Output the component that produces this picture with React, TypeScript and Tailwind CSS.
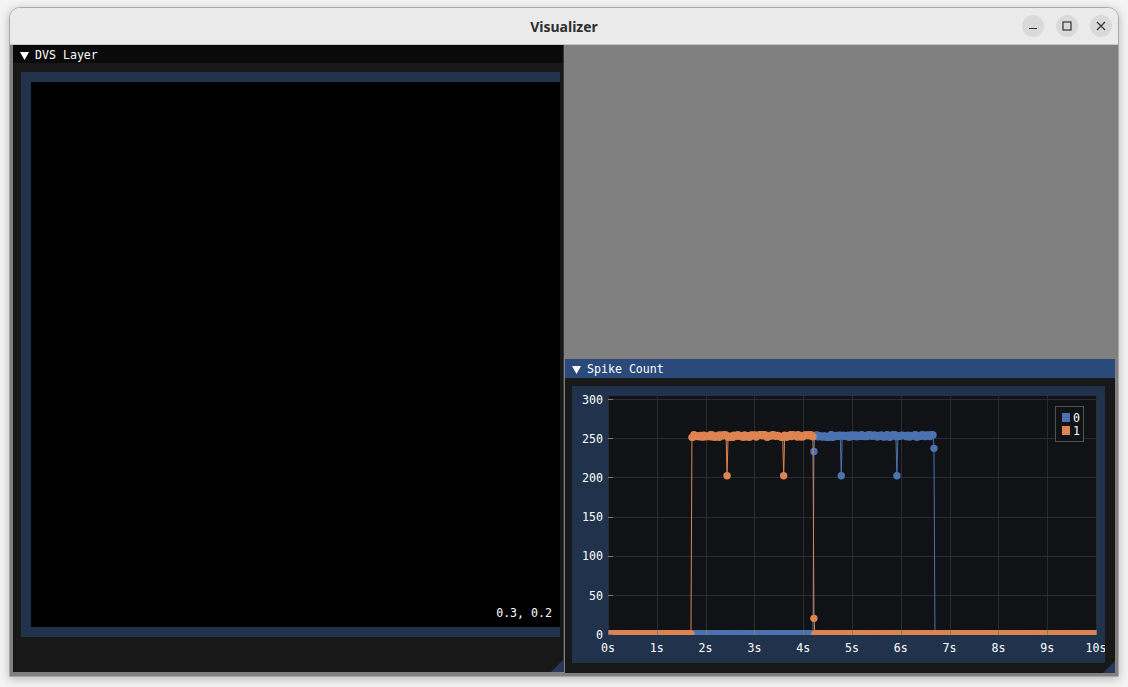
const BLUE = "#4c72b0";
const ORANGE = "#dd8452";
const MONO = "DejaVu Sans Mono, monospace";

function mulberry32(seed: number) {
  let a = seed;
  return () => {
    a |= 0;
    a = (a + 0x6d2b79f5) | 0;
    let t = Math.imul(a ^ (a >>> 15), 1 | a);
    t = (t + Math.imul(t ^ (t >>> 7), 61 | t)) ^ t;
    return ((t ^ (t >>> 14)) >>> 0) / 4294967296;
  };
}

// 0.02s samples over 0..10s
const N = 501;
function buildSeries() {
  const r = mulberry32(7);
  const plateau = () => 251 + r() * 3.5;
  const blue: number[] = [];
  const orange: number[] = [];
  for (let i = 0; i < N; i++) {
    let o = 0;
    if (i >= 86 && i <= 210) o = plateau();
    if (i === 122 || i === 180) o = 202;
    if (i === 211) o = 20;
    orange.push(o);

    let b = 0;
    if (i >= 212 && i <= 333) b = plateau();
    if (i === 239 || i === 296) b = 202;
    if (i === 211) b = 233;
    if (i === 334) b = 237;
    blue.push(b);
  }
  return { blue, orange };
}

const { blue, orange } = buildSeries();

const px = (i: number) => 36 + i * 0.02 * 48.8;
const py = (v: number) => 248 - v * (235 / 300);
const crisp = (v: number) => Math.round(v) + 0.5;

function Series({ data, color }: { data: number[]; color: string }) {
  const pts = data.map((v, i) => `${px(i).toFixed(2)},${py(v).toFixed(2)}`).join(" ");
  return (
    <g>
      <polyline points={pts} fill="none" stroke={color} strokeWidth={1} />
      {data.map((v, i) => (
        <circle key={i} cx={px(i)} cy={py(v)} r={3.7} fill={color} />
      ))}
    </g>
  );
}

function SpikePlot() {
  const yTicks = [0, 50, 100, 150, 200, 250, 300];
  const xTicks = [0, 1, 2, 3, 4, 5, 6, 7, 8, 9, 10];
  return (
    <svg width={533} height={277} className="block">
      <defs>
        <clipPath id="plotArea">
          <rect x={36} y={10} width={488} height={239} />
        </clipPath>
      </defs>
      <rect x={36} y={10} width={488} height={239} fill="#111215" />
      <g stroke="#2b2c30" strokeWidth={1}>
        {xTicks.map((t) => (
          <line key={t} x1={crisp(36 + t * 48.8)} x2={crisp(36 + t * 48.8)} y1={10} y2={249} />
        ))}
        {yTicks.map((v) => (
          <line key={v} x1={36} x2={524} y1={crisp(py(v))} y2={crisp(py(v))} />
        ))}
      </g>
      <g clipPath="url(#plotArea)">
        <Series data={blue} color={BLUE} />
        <Series data={orange} color={ORANGE} />
      </g>
      <g stroke="#7a7a7a" strokeWidth={1}>
        {yTicks.map((v) => (
          <line key={v} x1={36} x2={41} y1={crisp(py(v))} y2={crisp(py(v))} />
        ))}
        {xTicks.map((t) => (
          <line key={t} x1={crisp(36 + t * 48.8)} x2={crisp(36 + t * 48.8)} y1={249} y2={244} />
        ))}
      </g>
      <g fill="#ffffff" fontFamily={MONO} fontSize={11.6}>
        {yTicks.map((v) => (
          <text key={v} x={31} y={Math.round(py(v) + 4.8)} textAnchor="end">
            {v}
          </text>
        ))}
        {xTicks.map((t) => (
          <text key={t} x={36 + t * 48.8} y={266} textAnchor="middle">
            {t}s
          </text>
        ))}
      </g>
      <rect x={483.5} y={20.5} width={28} height={35} fill="#111215" stroke="#505156" />
      <rect x={490} y={27} width={8} height={9} fill={BLUE} />
      <rect x={490} y={40} width={8} height={9} fill={ORANGE} />
      <g fill="#ffffff" fontFamily={MONO} fontSize={11.6}>
        <text x={501} y={36}>0</text>
        <text x={501} y={49}>1</text>
      </g>
    </svg>
  );
}

function Arrow() {
  return (
    <svg width={9} height={8} className="block shrink-0">
      <polygon points="0,0 9,0 4.5,8" fill="#ffffff" />
    </svg>
  );
}

function Grip() {
  return (
    <svg width={12} height={12} className="absolute bottom-0 right-0 block">
      <polygon points="12,0 12,12 0,12" fill="#26395a" />
    </svg>
  );
}

export default function App() {
  return (
    <div className="h-[687px] w-[1128px] overflow-hidden bg-[#f4f4f4] pl-[9px] pt-[7px]">
      <div className="flex h-[670px] w-[1110px] flex-col overflow-hidden rounded-t-[11px] border border-[#a8a8a8] shadow-[0_2px_10px_rgba(0,0,0,0.25)]">
        {/* title bar */}
        <div className="relative flex h-[37px] shrink-0 items-center justify-center border-b border-[#c6c6c6] bg-[#ebebeb]">
          <span className="font-['Noto_Sans',sans-serif] text-[14px] font-bold text-[#2f2f2f]">Visualizer</span>
          <div className="absolute right-[6px] top-[7px] flex gap-[12px]">
            <div className="flex h-[22px] w-[22px] items-center justify-center rounded-full bg-[#dadada]">
              <svg width={10} height={10}>
                <line x1={1} x2={9} y1={7.5} y2={7.5} stroke="#333" strokeWidth={1.2} />
              </svg>
            </div>
            <div className="flex h-[22px] w-[22px] items-center justify-center rounded-full bg-[#dadada]">
              <svg width={10} height={10}>
                <rect x={1} y={1} width={8} height={8} fill="none" stroke="#333" strokeWidth={1.2} />
              </svg>
            </div>
            <div className="flex h-[22px] w-[22px] items-center justify-center rounded-full bg-[#dadada]">
              <svg width={10} height={10}>
                <path d="M1 1 L9 9 M9 1 L1 9" stroke="#333" strokeWidth={1.2} />
              </svg>
            </div>
          </div>
        </div>

        {/* gl area */}
        <div className="flex min-h-0 flex-1 bg-[#808080] pl-[3px]" style={{ fontFamily: MONO }}>
          {/* DVS Layer window */}
          <div className="relative flex h-[627px] w-[551px] shrink-0 flex-col border-r border-[#383838] bg-[#181818]">
            <div className="flex h-[18px] shrink-0 items-center gap-[6px] bg-[#0a0a0a] pl-[7px] pt-[3px] text-[11.6px] leading-none text-white">
              <Arrow />
              <span>DVS Layer</span>
            </div>
            <div className="pl-[8px] pt-[9px]">
              <div className="flex h-[565px] w-[539px] border-y-[10px] border-l-[10px] border-[#20324c] bg-black">
                <div className="flex flex-1 items-end justify-end pb-[7px] pr-[8px] text-[11.6px] leading-none text-white">
                  0.3, 0.2
                </div>
              </div>
            </div>
            <Grip />
          </div>

          {/* right column */}
          <div className="flex flex-1 flex-col pb-[3px] pl-px">
            <div className="flex-1" />
            <div className="relative flex h-[314px] w-[550px] flex-col bg-[#181818]">
              <div className="flex h-[19px] shrink-0 items-center gap-[6px] bg-[#294a7a] pl-[7px] pt-[2px] text-[11.6px] leading-none text-white">
                <Arrow />
                <span>Spike Count</span>
              </div>
              <div className="pl-[7px] pt-[8px]">
                <div className="h-[277px] w-[533px] bg-[#20324c]">
                  <SpikePlot />
                </div>
              </div>
              <Grip />
            </div>
          </div>
        </div>
      </div>
    </div>
  );
}
